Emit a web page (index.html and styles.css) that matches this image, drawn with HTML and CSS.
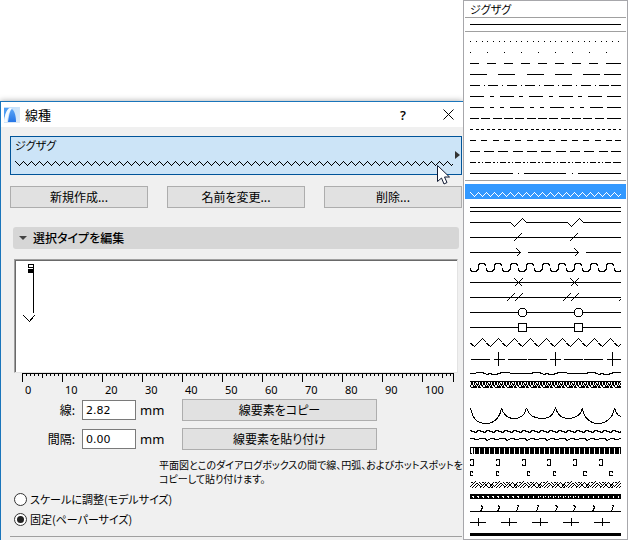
FILE: index.html
```html
<!DOCTYPE html>
<html lang="ja">
<head>
  <meta charset="UTF-8" />
  <meta name="viewport" content="width=device-width, initial-scale=1.0"/>
  <title>線種</title>
  <link rel="stylesheet" href="styles.css">
</head>
<body>

<!-- repeating strokes shared by the rows below -->
<svg class="defs" width="0" height="0" aria-hidden="true">
  <defs>
    <pattern id="zigzag" width="8" height="5" patternUnits="userSpaceOnUse"><path d="M-.5 -.5l5 5 4.5-4.5" /></pattern>
    <pattern id="coil" width="16" height="15" patternUnits="userSpaceOnUse"><path d="M0 8.500v2l2 2h4l2-2v-4l2-2h4l2 2v2" /></pattern>
    <pattern id="bigzag" width="16" height="15" patternUnits="userSpaceOnUse"><path d="M-.5 8.500L4.500 12.500 12.500 4.500 16.500 8.500" /></pattern>
    <pattern id="mesh" width="12" height="11" patternUnits="userSpaceOnUse">
      <path d="M0 2.500h12M0 8l3-5M3 9l2-6 2 2-3 4M6 9l3-6M8 9l4-6M10 3l2 4M1 3l2 3" />
      <path d="M1 8.500h2M7 5.500h2M4 8.500h2M9 8.500h2" />
    </pattern>
    <pattern id="ripple" width="9" height="8" patternUnits="userSpaceOnUse"><path d="M0 3.500h1l1 1h2l1 1h1l2-2h1" /></pattern>
    <pattern id="ripple2" width="20" height="8" patternUnits="userSpaceOnUse"><path d="M0 3.500h4l1 1h3l2-1h5l2 2 2-1h1" /></pattern>
    <pattern id="blocks" width="5" height="14" patternUnits="userSpaceOnUse"><path class="fill" d="M0 4h5v1h-1v6h-4z" /></pattern>
    <pattern id="grain" width="24" height="12" patternUnits="userSpaceOnUse">
      <path d="M0 8l6-6M2 9l5-5M5 9l3-3M7 4l4 4M9 3l3 3M10 9l6-6M13 9l5-5M15 5l4 4M18 3l3 3M19 9l5-6M22 8l2-2M1 3h2M12 3h2M21 8h2" />
    </pattern>
  </defs>
</svg>

<main class="workspace">
  <section class="dialog" aria-labelledby="dialog-title">
    <header class="titlebar">
      <svg class="app-icon" width="16" height="16" viewBox="0 0 16 16" aria-hidden="true">
        <defs>
          <linearGradient id="tile" x2="1" y2="1"><stop stop-color="#b9ddff" /><stop offset="1" stop-color="#e2ebf5" /></linearGradient>
          <linearGradient id="arch" y2="1" x2="0"><stop stop-color="#5ba5f6" /><stop offset="1" stop-color="#2675e6" /></linearGradient>
        </defs>
        <rect width="16" height="16" fill="url(#tile)" />
        <path d="M0 1h5C2 4 1 8 0 14z" fill="#4e9df3" />
        <path d="M0 15C1 7 3 1 7 1l1 1C5 4 4 9 3 15z" fill="#f4faff" />
        <path d="M4 15C5 8 6 3 8 2c3 2 4 8 4 13z" fill="url(#arch)" />
      </svg>
      <h1 class="title" id="dialog-title">線種</h1>
      <button class="window-button help" type="button" aria-label="ヘルプ">?</button>
      <button class="window-button" type="button" aria-label="閉じる">
        <svg width="11" height="11" aria-hidden="true"><path d="M.5 .5l10 10M10.500 .5l-10 10" fill="none" stroke="#000" /></svg>
      </button>
    </header>

    <div class="content">
      <div class="picker">
        <button class="line-select" type="button" aria-haspopup="listbox" aria-expanded="true">
          <span>ジグザグ</span>
          <svg class="line-sample" height="5" aria-hidden="true"><rect width="100%" height="5" fill="url(#zigzag)" /></svg>
          <svg class="arrow" width="5" height="8" aria-hidden="true"><path d="M0 0l5 4-5 4z" /></svg>
        </button>
        <svg class="cursor" width="13" height="20" aria-hidden="true"><path d="M.5 .5v16l4-3.500 2.500 6 3-1.500-2.500-5.500h5z" fill="#fff" stroke="#111a33" /></svg>
      </div>

      <div class="actions">
        <button class="button" type="button">新規作成...</button>
        <button class="button" type="button">名前を変更...</button>
        <button class="button" type="button">削除...</button>
      </div>

      <button class="panel-header" type="button" aria-expanded="true">
        <svg width="8" height="4" aria-hidden="true"><path d="M0 0h8l-4 4z" fill="#444" /></svg>
        選択タイプを編集
      </button>

      <div class="preview">
        <svg width="24" height="70" aria-hidden="true">
          <path class="stroke" d="M12.500 4.500h5v3h-5zM17.500 8v45M7.500 55.500l6 6 5-6" />
          <path class="fill" d="M12 9h6v4h-6z" />
        </svg>
      </div>

      <div class="ruler">
        <svg class="scale" height="9" aria-hidden="true">
          <defs>
            <pattern id="ticks" width="40" height="9" patternUnits="userSpaceOnUse">
              <path class="fill" d="M0 0h40v1h-40zM0 0h1v9h-1zM4 0h1v3h-1zM8 0h1v3h-1zM12 0h1v3h-1zM16 0h1v3h-1zM20 0h1v5h-1zM24 0h1v3h-1zM28 0h1v3h-1zM32 0h1v3h-1zM36 0h1v3h-1z" />
            </pattern>
          </defs>
          <rect width="100%" height="9" fill="url(#ticks)" />
        </svg>
        <div class="ruler-labels">
          <span>0</span><span>10</span><span>20</span><span>30</span><span>40</span><span>50</span>
          <span>60</span><span>70</span><span>80</span><span>90</span><span>100</span>
        </div>
      </div>

      <div class="fields">
        <label for="line-length">線:</label>
        <input class="number" id="line-length" type="text" value="2.82">
        <span class="unit">mm</span>
        <button class="button" type="button">線要素をコピー</button>
        <label for="line-gap">間隔:</label>
        <input class="number" id="line-gap" type="text" value="0.00">
        <span class="unit">mm</span>
        <button class="button" type="button">線要素を貼り付け</button>
      </div>

      <p class="hint">平面図とこのダイアログボックスの間で線、円弧、およびホットスポットを<br>コピーして貼り付けます。</p>

      <div class="scaling">
        <label class="radio"><input type="radio" name="scaling">スケールに調整(モデルサイズ)</label>
        <label class="radio"><input type="radio" name="scaling" checked>固定(ペーパーサイズ)</label>
      </div>
      <hr class="divider">
    </div>
  </section>
</main>

<aside class="popup">
  <h2 class="popup-title">ジグザグ</h2>
  <div class="group">
    <button class="line" type="button" aria-label="実線"><svg height="13"><path d="M0 6.500h151" /></svg></button>
  </div>
  <div class="group dashed">
    <button class="line" type="button" aria-label="点線"><svg height="11"><path stroke-dasharray="1 5 1 5 1 4" d="M0 5.500h149" /></svg></button>
    <button class="line" type="button" aria-label="点線 広"><svg height="11"><path stroke-dasharray="1 16" d="M0 5.500h151" /></svg></button>
    <button class="line" type="button" aria-label="破線"><svg height="11"><path stroke-dasharray="9 8" d="M0 5.500h136" /><path d="M136 5.500h15" /></svg></button>
    <button class="line" type="button" aria-label="破線 長"><svg height="11"><path d="M0 5.500h17m11 0h17m12 0h17m11 0h17m11 0h17m4 0h17" /></svg></button>
    <button class="line" type="button" aria-label="一点鎖線"><svg height="11"><path stroke-dasharray="10 4 1 3 10 4 1 4" d="M0 5.500h141" /><path d="M141 5.500h10" /></svg></button>
    <button class="line" type="button" aria-label="一点鎖線 長"><svg height="11"><path stroke-dasharray="14 6 4 6 14 5 4 6" d="M0 5.500h132" /><path d="M137 5.500h14" /></svg></button>
    <button class="line" type="button" aria-label="二点鎖線"><svg height="11"><path stroke-dasharray="14 6 4 6 4 6" d="M0 5.500h133" /><path d="M137 5.500h14" /></svg></button>
    <button class="line" type="button" aria-label="破線 密"><svg height="11"><path stroke-dasharray="9 2 9 3 9 2" d="M0 5.500h134" /><path d="M137 5.500h14" /></svg></button>
    <button class="line" type="button" aria-label="破線 短"><svg height="11"><path stroke-dasharray="3 3 3 2" d="M0 5.500h151" /></svg></button>
    <button class="line" type="button" aria-label="破線 中"><svg height="11"><path stroke-dasharray="6 5 6 6 6 5" d="M0 5.500h144" /><path d="M145 5.500h6" /></svg></button>
    <button class="line" type="button" aria-label="破線 粗"><svg height="11"><path stroke-dasharray="10 4 10 4 10 5" d="M0 5.500h138" /><path d="M141 5.500h10" /></svg></button>
    <button class="line" type="button" aria-label="三点鎖線"><svg height="11"><path stroke-dasharray="6 2 2 2 1 2" d="M0 5.500h141" /><path d="M143 5.500h8" /></svg></button>
    <button class="line" type="button" aria-label="中心線"><svg height="11"><path d="M0 5.500h43m5 0h1m5 0h42m6 0h1m5 0h43" /></svg></button>
  </div>
  <div class="group symbols">
    <button class="line selected" type="button" aria-label="ジグザグ"><svg height="15"><path d="M.5 8.500l4 4 4-4 4 4 4-4 4 4 4-4 4 4 4-4 4 4 4-4 4 4 4-4 4 4 4-4 4 4 4-4 4 4 4-4 4 4 4-4 4 4 4-4 4 4 4-4 4 4 4-4 4 4 4-4 4 4 4-4 4 4 4-4 4 4 4-4 4 4 4-4 4 4 4-4 3 3" /></svg></button>
    <button class="line" type="button" aria-label="二重線"><svg height="15"><path d="M0 8.500h151M0 12.500h151" /></svg></button>
    <button class="line" type="button" aria-label="破断線"><svg height="15"><path d="M0 8.500h40.500l4 4 8-8 4 4h41l4 4 8-8 4 4H151" /></svg></button>
    <button class="line" type="button" aria-label="斜線付き"><svg height="15"><path d="M0 8.500h151M43.500 12.500l8-8M99.500 12.500l8-8" /></svg></button>
    <button class="line" type="button" aria-label="矢印"><svg height="15"><path d="M0 8.500h50M46.500 4.500l4 4-4 4M58 8.500h50M104.500 4.500l4 4-4 4M116 8.500h35" /></svg></button>
    <button class="line" type="button" aria-label="コイル"><svg height="15"><rect width="151" height="15" fill="url(#coil)" /></svg></button>
    <button class="line" type="button" aria-label="×付き"><svg height="15"><path d="M0 8.500h151M44.500 4.500l8 8m0-8l-8 8M100.500 4.500l8 8m0-8l-8 8" /></svg></button>
    <button class="line" type="button" aria-label="二重斜線付き"><svg height="15"><path d="M0 8.500h151M36.500 12.500l8-8M44.500 12.500l8-8M92.500 12.500l8-8M100.500 12.500l8-8M148.500 12.500l4-4" /></svg></button>
    <button class="line" type="button" aria-label="円付き"><svg height="15"><path d="M0 8.500h48M57 8.500h47M113 8.500h38M50.500 4.500h4l2 2v4l-2 2h-4l-2-2v-4zM106.500 4.500h4l2 2v4l-2 2h-4l-2-2v-4z" /></svg></button>
    <button class="line" type="button" aria-label="四角付き"><svg height="15"><path d="M0 8.500h48M57 8.500h47M113 8.500h38M48.500 4.500h8v8h-8zM104.500 4.500h8v8h-8z" /></svg></button>
    <button class="line" type="button" aria-label="ジグザグ 大"><svg height="15"><rect width="151" height="15" fill="url(#bigzag)" /></svg></button>
    <button class="line" type="button" aria-label="十字付き"><svg height="19"><path d="M1 10.500h19m4 0h11m3 0h19m1 0h19m3 0h11m3 0h19m1 0h19m4 0h14M28.500 3v14M85.500 3v14M142.500 3v14" /></svg></button>
    <button class="line" type="button" aria-label="手書き"><svg height="11"><path d="M0 5.500h5l2-1h5l3 1 2 1 3-1 3 1h3l3-1 3-1h7l2 1h20l3-1h5l3 1 2 1 3-1 3 1h3l3-1 3-1h7l2 1h18l3-1h5l3 1 2 1 3-1 3 1h3l3-1 3-1h7" /></svg></button>
    <button class="line" type="button" aria-label="網目"><svg height="11"><rect width="151" height="11" fill="url(#mesh)" /></svg></button>
    <button class="line" type="button" aria-label="雲形"><svg height="37"><path d="M.5 18C3 30 8 33.500 16 33.500S30 28 31.500 18C34 26 38 28.500 44 28.500S55 26 56.500 18C59 26 64 28.500 72 28.500S83 25 85.500 18C88 26 92 28.500 98 28.500S111 26 112.500 18C114 29 121 33.500 128 33.500S143 29 144.500 18C146 23 148 26 151 26.500" /></svg></button>
    <button class="line" type="button" aria-label="さざ波"><svg height="8"><rect width="151" height="8" fill="url(#ripple)" /></svg></button>
    <button class="line" type="button" aria-label="さざ波 粗"><svg height="8"><rect width="151" height="8" fill="url(#ripple2)" /></svg></button>
    <button class="line" type="button" aria-label="ブロック"><svg height="14"><path d="M.5 11v-6M0 4.500h3M0 10.500h2" /><rect x="3" width="148" height="14" fill="url(#blocks)" /></svg></button>
    <button class="line" type="button" aria-label="かぎ"><svg height="11"><path d="M.5 4v-1.500h3v6h-3v-1.500M26.500 4v-1.500h3v6h-3v-1.500M52.500 4v-1.500h3v6h-3v-1.500M77.500 4v-1.500h3v6h-3v-1.500M103.500 4v-1.500h3v6h-3v-1.500M129.500 4v-1.500h3v6h-3v-1.500" /></svg></button>
    <button class="line" type="button" aria-label="かぎ 小"><svg height="11"><path d="M2.500 4.500v-1h-2v4h2v-1M28.500 4.500v-1h-2v4h2v-1M59.500 4.500v-1h-2v4h2v-1M85.500 4.500v-1h-2v4h2v-1M116.500 4.500v-1h-3v4h3v-1M142.500 4.500v-1h-3v4h3v-1" /></svg></button>
    <button class="line" type="button" aria-label="砂目"><svg height="12"><rect width="151" height="12" fill="url(#grain)" /></svg></button>
    <button class="line" type="button" aria-label="帯"><svg height="11"><path class="fill" d="M0 3h151v5H0z" /><path class="light" stroke-width="2" stroke-dasharray="1 4" d="M3 6h148" /><path class="light" stroke-dasharray="1 4" d="M2 5.500h50M70 5.500h36" /></svg></button>
    <button class="line" type="button" aria-label="草"><svg height="12"><path d="M0 9.500h151M11.500 3.500l1 2-2 4M28.500 3.500l1 2-2 4M46.500 3.500h2l-2 6M66.500 3.500h2l-2 6M85.500 3.500l2 1-2 5M103.500 3.500l2 1-2 5M123.500 3.500l1 2-2 4M141.500 3.500h2l-2 6" /></svg></button>
    <button class="line" type="button" aria-label="十字"><svg height="16"><path d="M0 8.500h16m15 0h16m15 0h16m15 0h16m15 0h16M8.500 4v8M39.500 4v8M70.500 4v8M101.500 4v8M132.500 4v8" /></svg></button>
    <button class="line" type="button" aria-label="太線"><svg height="9"><path class="fill" d="M0 3h151v3H0z" /></svg></button>
  </div>
</aside>

</body>
</html>
```
FILE: styles.css
```css
* {
  box-sizing: border-box;
}

body {
  display: flex;
  min-height: 100vh;
  margin: 0;
  background: #fff;
  color: #000;
  font-family: "Noto Sans CJK JP", sans-serif;
  font-feature-settings: "palt";
  font-size: 12px;
  line-height: 16px;
}

button, input {
  margin: 0;
  color: inherit;
  font: inherit;
  font-feature-settings: inherit;
}

svg {
  display: block;
}

.defs {
  position: absolute;
}

.fill {
  fill: #000;
  stroke: none;
}

pattern path, .stroke, .line path {
  fill: none;
  stroke: #000;
  shape-rendering: crispEdges;
}

pattern .fill, .line .fill {
  fill: #000;
  stroke: none;
}

.workspace {
  display: flex;
  flex: 1;
  min-width: 0;
  padding-top: 101px;
}

.dialog {
  flex: 1;
  min-width: 0;
  background: #f0f0f0;
  border: solid #1a75bb;
  border-width: 1px 0 0 1px;
  box-shadow: 0 0 6px rgba(0, 0, 0, 0.35);
}

.titlebar {
  display: flex;
  align-items: center;
  height: 25px;
  padding: 0 9px 0 3px;
  background: #fff;
}

.title {
  flex: 1;
  margin: 0 0 0 5px;
  font-size: 13px;
  font-weight: normal;
}

.window-button {
  padding: 0;
  background: none;
  border: 0;
}

.help {
  margin-right: 37px;
  font-family: "Open Sans", sans-serif;
  font-size: 13px;
  font-weight: 600;
}

.content {
  padding: 9px 1px 0 9px;
}

.picker {
  position: relative;
}

.line-select {
  position: relative;
  display: block;
  width: 100%;
  height: 39px;
  padding: 0 8px 8px 4px;
  background: #cce4f7;
  border: 1px solid #005499;
  font-size: 11px;
  text-align: left;
}

.line-select span {
  display: block;
}

.line-sample {
  width: 100%;
  margin-top: 8px;
}

.arrow {
  position: absolute;
  top: 14px;
  right: 1px;
  fill: #333;
}

.cursor {
  position: absolute;
  top: 29px;
  right: 12px;
}

.actions {
  display: grid;
  grid-template-columns: repeat(3, 1fr);
  gap: 19px;
  margin-top: 11px;
}

.button {
  height: 22px;
  padding: 0;
  background: #e1e1e1;
  border: 1px solid #adadad;
}

.panel-header {
  display: flex;
  align-items: center;
  gap: 6px;
  width: calc(100% - 6px);
  height: 22px;
  margin: 19px 3px 0;
  padding: 0 6px;
  background: #d6d6d6;
  border: 0;
  border-radius: 3px;
  font-weight: 500;
}

.preview {
  height: 114px;
  margin: 10px 4px 0;
  background: #fff;
  border: 1px solid;
  border-color: #a0a0a0 #e3e3e3 #e3e3e3 #a0a0a0;
  box-shadow: inset 1px 1px #696969;
}

.preview svg {
  margin-left: 1px;
}

.ruler {
  margin: 0 8px 0 12px;
  font-family: "Noto Sans", sans-serif;
  font-size: 11px;
}

.scale {
  width: 100%;
  border-right: 1px solid #000;
}

.ruler-labels {
  display: flex;
}

.ruler-labels span {
  flex: 0 0 40px;
  padding-left: 3px;
}

.fields {
  display: grid;
  grid-template-columns: 65px 54px 38px 198px;
  gap: 7px 4px;
  align-items: center;
  margin-top: 1px;
}

.fields label {
  text-align: right;
}

.fields .button {
  margin-left: 3px;
}

.number {
  width: 54px;
  height: 20px;
  margin-left: 3px;
  padding: 0 3px;
  background: #fff;
  border: 1px solid #7a7a7a;
  font-family: "DejaVu Sans", sans-serif;
  font-size: 11px;
}

.unit {
  padding-left: 3px;
  font-family: "Noto Sans", sans-serif;
  font-size: 13px;
}

.hint {
  margin: 8px 0 0 149px;
  font-size: 10px;
  line-height: 14px;
  white-space: nowrap;
}

.scaling {
  display: grid;
  gap: 4px;
  margin: 5px 0 0 4px;
  font-size: 11px;
}

.radio {
  display: flex;
  align-items: center;
  gap: 3px;
}

.radio input {
  display: grid;
  place-items: center;
  width: 13px;
  height: 13px;
  background: #fff;
  border: 1px solid #333;
  border-radius: 50%;
  appearance: none;
}

.radio input:checked::before {
  content: "";
  width: 7px;
  height: 7px;
  background: #222;
  border-radius: 50%;
}

.divider {
  height: 1px;
  margin: 9px 0 0;
  background: #a0a0a0;
  border: 0;
}

.popup {
  position: relative;
  flex: 0 0 165px;
  padding: 0 1px;
  background: #fff;
  border: 1px solid #a7a7ab;
}

.popup-title {
  height: 16px;
  margin: 0;
  padding-left: 5px;
  font-size: 11px;
  font-weight: normal;
}

.group {
  border-top: 1px solid #a0a0a0;
}

.dashed {
  padding: 4px 0 1px;
}

.symbols {
  padding-top: 3px;
}

.line {
  display: block;
  width: 100%;
  padding: 0 5px;
  background: none;
  border: 0;
}

.line svg {
  width: 100%;
}

.line .light, .selected path {
  stroke: #fff;
}

.selected {
  background: #3399ff;
}
```
